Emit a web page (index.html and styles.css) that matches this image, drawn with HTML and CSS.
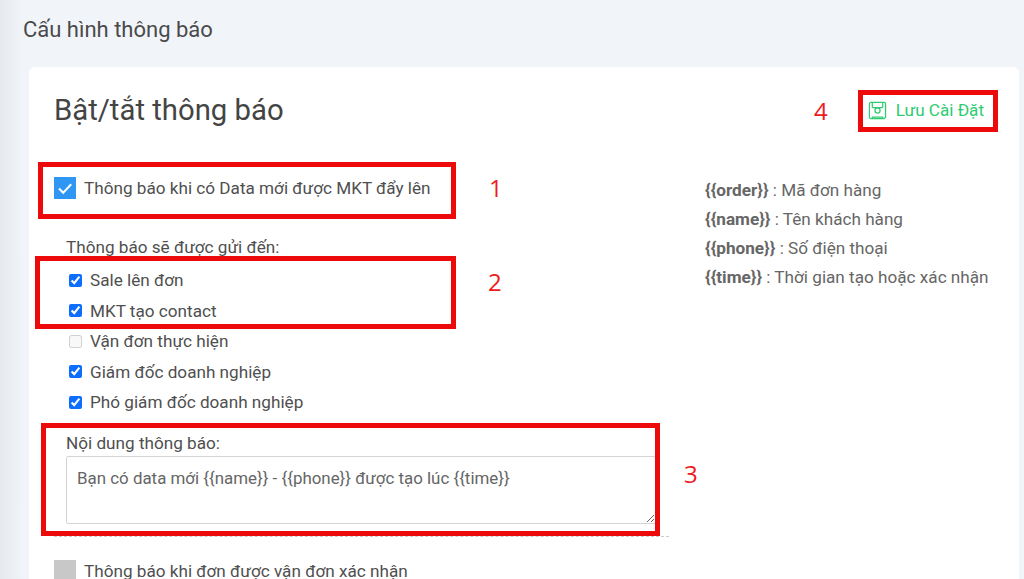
FILE: index.html
```html
<!DOCTYPE html>
<html lang="vi">
<head>
<meta charset="utf-8">
<title>Cấu hình thông báo</title>
<link rel="stylesheet" href="styles.css">
</head>
<body>
<div class="page">
  <h1 class="page-title">Cấu hình thông báo</h1>
  <section class="card">
    <header class="card-head">
      <h2 class="card-title">Bật/tắt thông báo</h2>
      <button class="save" type="button">
        <svg class="save-icon" viewBox="0 0 20 20" width="19" height="19" fill="none" stroke="currentColor" stroke-width="1.3">
          <path d="M1.5 3a1.5 1.5 0 0 1 1.500-1.500h14a1.500 1.500 0 0 1 1.500 1.500v14l-1.500 1.500h-14a1.500 1.500 0 0 1-1.500-1.500z"/>
          <path d="M4.500 1.500v4.500a1 1 0 0 0 1 1h9a1 1 0 0 0 1-1v-4.500"/>
          <path d="M4.500 18.500v-1.500h11v1.500"/>
          <circle cx="10" cy="10" r="2.700"/>
        </svg>
        <span>Lưu Cài Đặt</span>
      </button>
    </header>
    <div class="columns">
      <div class="form">
        <label class="master">
          <span class="big-check on">
            <svg viewBox="0 0 22 22" width="22" height="22" fill="none" stroke="#fff" stroke-width="2"><path d="M5 11.500l4.200 4.200 8-8.500"/></svg>
          </span>
          Thông báo khi có Data mới được MKT đẩy lên
        </label>
        <div class="group">
          <p class="group-label">Thông báo sẽ được gửi đến:</p>
          <label class="opt"><input type="checkbox" checked>Sale lên đơn</label>
          <label class="opt"><input type="checkbox" checked>MKT tạo contact</label>
          <label class="opt"><input type="checkbox" disabled>Vận đơn thực hiện</label>
          <label class="opt"><input type="checkbox" checked>Giám đốc doanh nghiệp</label>
          <label class="opt"><input type="checkbox" checked>Phó giám đốc doanh nghiệp</label>
          <p class="content-label">Nội dung thông báo:</p>
          <textarea class="content" readonly>Bạn có data mới {{name}} - {{phone}} được tạo lúc {{time}}</textarea>
        </div>
        <div class="divider"></div>
        <label class="master second">
          <span class="big-check off"></span>
          Thông báo khi đơn được vận đơn xác nhận
        </label>
      </div>
      <ul class="legend">
        <li><b>{{order}}</b> : Mã đơn hàng</li>
        <li><b>{{name}}</b> : Tên khách hàng</li>
        <li><b>{{phone}}</b> : Số điện thoại</li>
        <li><b>{{time}}</b> : Thời gian tạo hoặc xác nhận</li>
      </ul>
    </div>
  </section>
</div>
<div class="mark mark-1"></div>
<div class="mark mark-2"></div>
<div class="mark mark-3"></div>
<div class="mark mark-4"></div>
<span class="num num-1">1</span>
<span class="num num-2">2</span>
<span class="num num-3">3</span>
<span class="num num-4">4</span>
</body>
</html>
```
FILE: styles.css
```css
* { box-sizing: border-box; }
html, body { margin: 0; height: 100%; overflow: hidden; }
body {
  position: relative;
  background: #f1f5fa;
  font-family: Roboto, "Liberation Sans", sans-serif;
  color: #555;
  font-size: 17.150px;
}
body::before {
  content: "";
  position: absolute;
  left: 0; top: 0; bottom: 0;
  width: 24px;
  background: linear-gradient(to right, #e6e9ed, #f1f5fa);
}
.page {
  position: relative;
  display: flex;
  flex-direction: column;
  height: 100%;
  overflow: hidden;
  padding: 17px 5px 0 29px;
}
.page-title {
  flex: none;
  margin: 0 0 24px -6px;
  font-size: 22px;
  line-height: 26px;
  font-weight: 400;
  color: #4a4a4a;
}
.card {
  flex: 1;
  min-height: 0;
  overflow: hidden;
  background: #fff;
  border-radius: 6px 6px 0 0;
  padding: 24px 21px 0 25px;
}
.card-head { display: flex; justify-content: space-between; align-items: center; height: 38px; }
.card-title { margin: 0; font-size: 29.300px; line-height: 38px; font-weight: 400; color: #444; }
.save {
  display: flex; align-items: center; gap: 9px;
  border: 0; border-left: 1px solid #2ecc71; background: none;
  padding: 0 14px 0 9px; height: 36px;
  font: 17.100px Roboto, sans-serif; color: #2ecc71;
}
.columns { display: flex; padding-top: 48px; }
.form { width: 651px; flex: none; }
.master { display: flex; align-items: center; gap: 8px; height: 22px; line-height: 22px; color: #4f4f4f; }
.big-check { width: 22px; height: 22px; display: block; flex: none; }
.big-check.on { background: #2f96f3; }
.big-check.off { background: #c8c8c8; }
.group { padding: 37px 0 0 12px; }
.group-label, .content-label { margin: 0; line-height: 22px; color: #4f4f4f; }
.opt { display: flex; align-items: center; height: 30.500px; padding-left: 3px; color: #4f4f4f; }
.opt input { width: 13px; height: 13px; margin: 0 8px 0 0; accent-color: #0d6efd; }
.group-label { margin-bottom: 7px; }
.content-label { margin-top: 14px; }
.content {
  display: block;
  width: 590px; height: 68px;
  margin-top: 2px;
  padding: 10px 10px;
  border: 1px solid #d4d4d4;
  border-radius: 2px;
  font: 16.900px/22px Roboto, sans-serif;
  color: #666;
  outline: none;
}
.divider { margin-top: 12px; width: 615px; border-top: 1px dashed #ccc; }
.second { margin-top: 23px; }
.legend { list-style: none; margin: -1px 0 0; padding: 0; line-height: 29px; color: #666; }
.legend b { font-weight: 700; color: #666; }
.mark { position: absolute; border: 5px solid #ed0a0a; }
.mark-1 { left: 38px; top: 162px; width: 418px; height: 57px; }
.mark-2 { left: 35px; top: 256px; width: 421px; height: 73px; }
.mark-3 { left: 41px; top: 423px; width: 619px; height: 113px; }
.mark-4 { left: 858px; top: 90px; width: 140px; height: 42px; }
.num { position: absolute; font: 24px/28px "Open Sans", sans-serif; color: #ed1c1c; }
.num-1 { left: 489px; top: 174px; }
.num-2 { left: 488px; top: 268px; }
.num-3 { left: 684px; top: 460px; }
.num-4 { left: 814px; top: 97px; }
```
